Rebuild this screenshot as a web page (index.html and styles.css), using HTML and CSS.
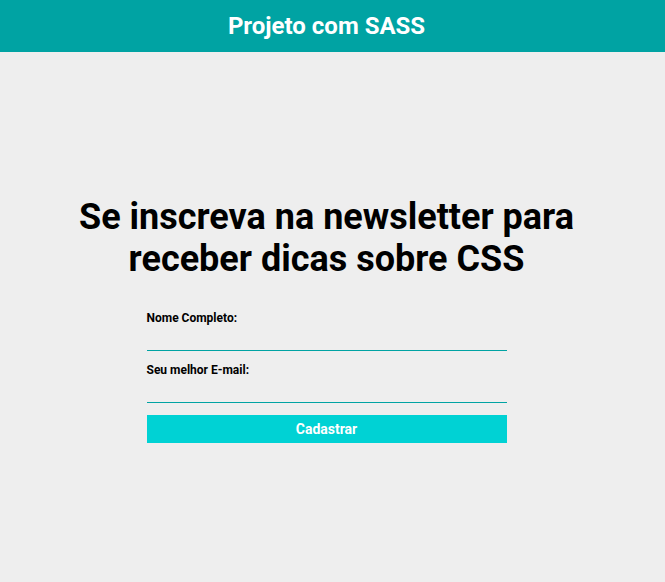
FILE: index.html
```html
<!DOCTYPE html>
<html lang="pt-BR">
<head>
<meta charset="utf-8">
<title>Projeto com SASS</title>
<link rel="stylesheet" href="styles.css">
</head>
<body>
<header class="topbar">
  <h2 class="topbar__title">Projeto com SASS</h2>
</header>
<main class="content">
  <h1 class="content__title">Se inscreva na newsletter para receber dicas sobre CSS</h1>
  <form class="form">
    <label class="form__label" for="nome">Nome Completo:</label>
    <input class="form__input" id="nome" type="text">
    <label class="form__label" for="email">Seu melhor E-mail:</label>
    <input class="form__input" id="email" type="email">
    <button class="form__button" type="button">Cadastrar</button>
  </form>
</main>
</body>
</html>
```

FILE: styles.css
```css
* { box-sizing: border-box; }
html, body { margin: 0; padding: 0; }
body {
  background: #eeeeee;
  font-family: Roboto, "Liberation Sans", sans-serif;
  color: #000;
  min-height: 582px;
}
.topbar {
  background: #00a3a3;
  height: 52px;
  display: flex;
  align-items: center;
  justify-content: center;
  padding-right: 12px;
}
.topbar__title {
  margin: 0;
  color: #fff;
  font-size: 24px;
  font-weight: 700;
  line-height: 28px;
}
.content {
  display: flex;
  flex-direction: column;
  align-items: center;
  padding: 144px 12px 0 0;
}
.content__title {
  margin: 0;
  width: 560px;
  text-align: center;
  font-size: 36px;
  font-weight: 700;
  line-height: 42px;
}
.form {
  width: 360px;
  margin-top: 31px;
  display: flex;
  flex-direction: column;
}
.form__label {
  font-size: 12px;
  font-weight: 700;
  line-height: 14px;
}
.form__input {
  height: 26px;
  border: none;
  border-bottom: 1px solid #00a3a3;
  border-radius: 0;
  background: transparent;
  outline: none;
  margin-bottom: 12px;
  padding: 0;
  font-family: inherit;
}
.form__button {
  height: 28px;
  border: 0;
  background: #00d2d4;
  color: #fff;
  font-family: inherit;
  font-size: 14px;
  font-weight: 700;
  cursor: pointer;
}
```
